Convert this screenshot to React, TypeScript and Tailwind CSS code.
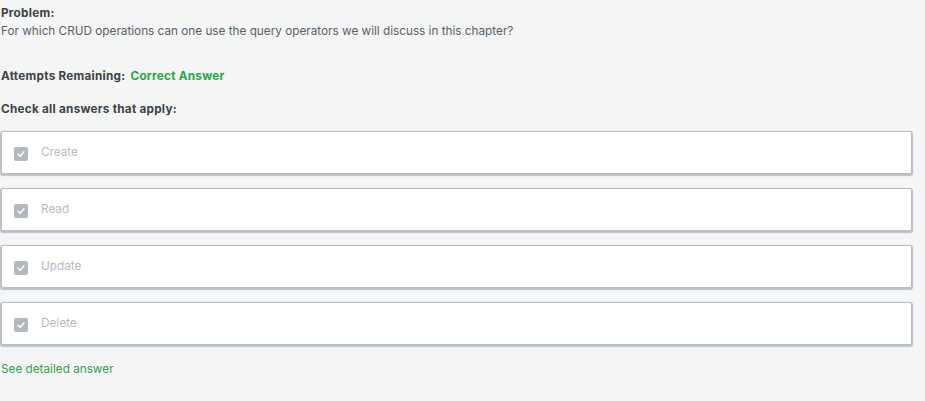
import React from 'react';

const options = ['Create', 'Read', 'Update', 'Delete'];

const CheckMark: React.FC = () => (
  <span className="flex h-[14px] w-[14px] items-center justify-center rounded-[2px] bg-[#b3b8be]">
    <svg width="10" height="10" viewBox="0 0 10 10" fill="none">
      <path d="M2 5.2 L4.2 7.2 L8 2.8" stroke="#ffffff" strokeWidth="1.5" strokeLinecap="round" strokeLinejoin="round" />
    </svg>
  </span>
);

export default function App() {
  return (
    <div className="min-h-[401px] w-[925px] bg-[#f4f5f7] pl-[1px] pr-[13px] pt-[6px] font-['Inter',sans-serif] text-[#4a4f55]">
      {/* Problem */}
      <div className="text-[11.75px] leading-[15px] font-bold tracking-[0.25px] text-[#3d4248]">Problem:</div>
      <div className="mt-[3px] text-[11.75px] leading-[15px] text-[#5b6066]">
        For which CRUD operations can one use the query operators we will discuss in this chapter?
      </div>

      <div className="mt-[30px] flex items-center gap-[5px] text-[11.75px] leading-[15px] font-bold tracking-[0.25px]">
        <span className="text-[#3d4248]">Attempts Remaining:</span>
        <span className="text-[#27a545]">Correct Answer</span>
      </div>

      <div className="mt-[18px] text-[11.75px] leading-[15px] font-bold tracking-[0.25px] text-[#3d4248]">
        Check all answers that apply:
      </div>

      {/* Options */}
      <div className="mt-[14px] flex flex-col gap-[14px]">
        {options.map((opt) => (
          <div
            key={opt}
            className="flex h-[43px] items-center gap-[13px] rounded-[2px] border border-[#b9bdc2] bg-white pl-[12px] pt-[2px] shadow-[0_1px_1px_1px_rgba(150,155,160,0.6)]"
          >
            <CheckMark />
            <span className="-mt-[1px] text-[11.75px] text-[#b5babf]">{opt}</span>
          </div>
        ))}
      </div>

      <div className="mt-[17px] text-[11.75px] leading-[15px] text-[#3b9d4f]">See detailed answer</div>
    </div>
  );
}
